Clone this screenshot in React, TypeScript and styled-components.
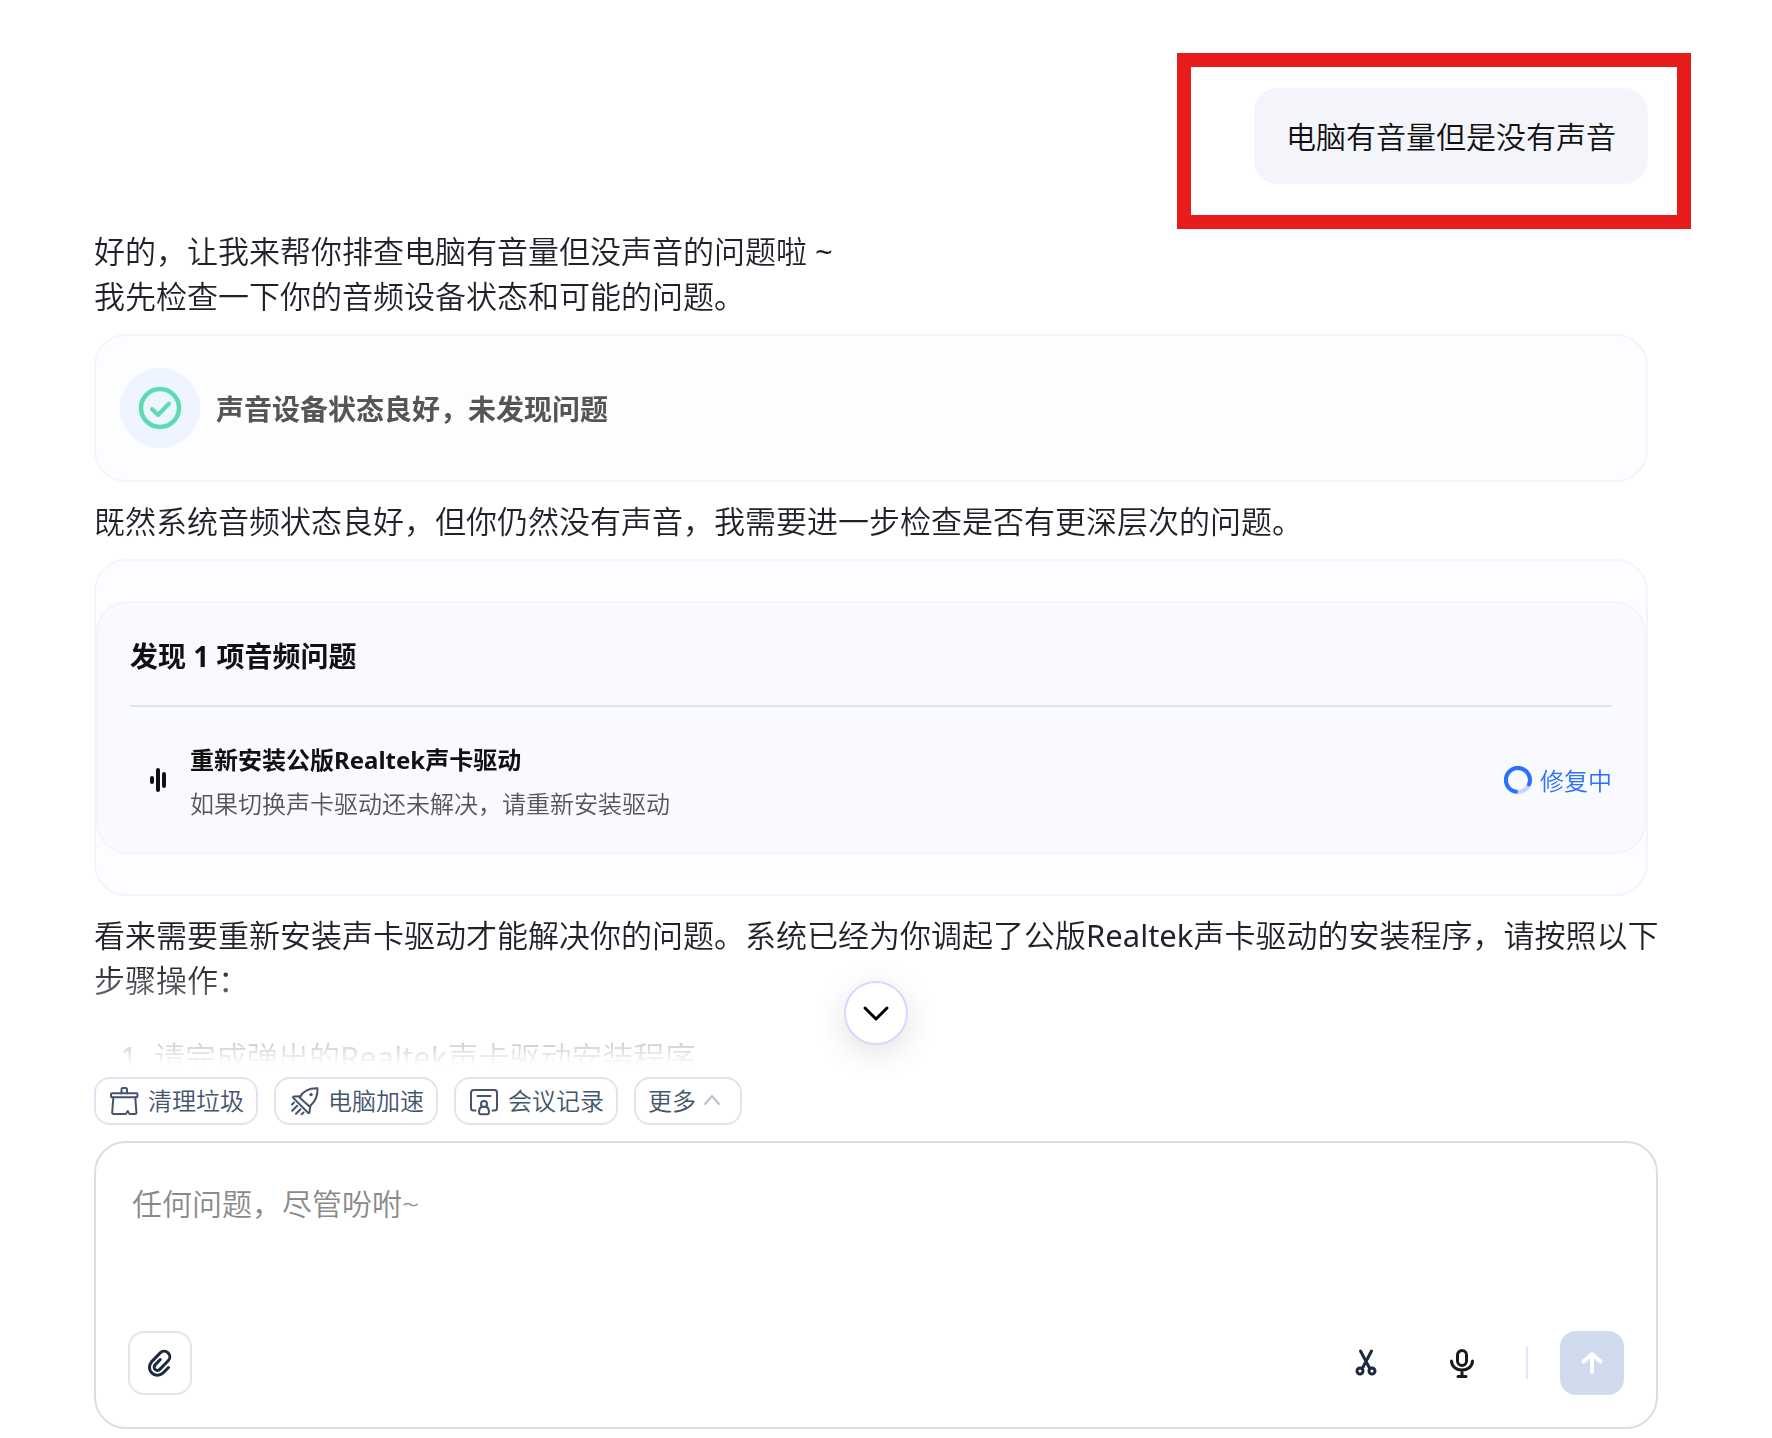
import React from "react";
import styled, { createGlobalStyle } from "styled-components";

const Global = createGlobalStyle`
  * { box-sizing: border-box; }
  body {
    margin: 0;
    background: #fff;
    color: #1f2329;
    font-family: "Noto Sans", "Noto Sans CJK SC", sans-serif;
    font-weight: 350;
  }
  button, textarea { font: inherit; }
`;

const Page = styled.div`
  display: flex;
  flex-direction: column;
  height: 100vh;
  overflow: hidden;
`;

const Feed = styled.main`
  flex: 1;
  min-height: 0;
  overflow: hidden;
  padding: 88px 124px 0 94px;
  mask-image: linear-gradient(to top, transparent 0, #000 100px);
`;

const UserRow = styled.div`
  display: flex;
  justify-content: flex-end;
  margin-bottom: 45px;
`;

const Bubble = styled.div`
  position: relative;
  padding: 25px 32px 23px;
  border-radius: 24px;
  background: #f3f5fa;
  color: #111;
  font-size: 30px;
  line-height: 48px;
`;

const Highlight = styled.div`
  position: absolute;
  inset: -35px -43px -45px -77px;
  border: 14px solid #e71c1c;
  pointer-events: none;
`;

const Answer = styled.p`
  margin: 0;
  font-size: 31px;
  line-height: 45px;
  white-space: nowrap;
`;

const Latin = styled.span`
  font-weight: 400;
`;

const Card = styled.section`
  margin: 15px 0 17px;
  border: 2px solid #f3f5fa;
  border-radius: 32px;
  background: #fcfdff;
`;

const ResultCard = styled(Card)`
  display: flex;
  align-items: center;
  gap: 16px;
  padding: 32px 24px;
  color: #555;
  font-size: 28px;
  font-weight: 700;
`;

const CheckBadge = styled.span`
  display: flex;
  align-items: center;
  justify-content: center;
  width: 80px;
  height: 80px;
  border-radius: 50%;
  background: #eef5ff;
`;

const IssueCard = styled(Card)`
  padding: 40px 0;
`;

const IssuePanel = styled.div`
  padding: 0 32px;
  border: 2px solid #f3f5fa;
  border-radius: 32px;
  background: #f9faff;
  color: #111;
`;

const IssueHeading = styled.h2`
  margin: 0;
  padding: 34px 0 30px;
  border-bottom: 2px solid #dfe5ee;
  font-size: 28px;
  font-weight: 700;
  line-height: 38px;
`;

const IssueItem = styled.div`
  display: flex;
  align-items: center;
  height: 145px;
`;

const IssueIcon = styled.span`
  display: flex;
  justify-content: center;
  width: 56px;
`;

const IssueText = styled.div`
  flex: 1;
  padding-top: 5px;
  margin-left: 4px;
  font-size: 24px;
  line-height: 44px;
`;

const IssueName = styled.div`
  font-weight: 700;
`;

const IssueHint = styled.div`
  color: #555;
`;

const Status = styled.span`
  display: flex;
  align-items: center;
  gap: 8px;
  color: #2b6fff;
  font-size: 24px;
`;

const Steps = styled.ol`
  margin: 32px 0 0;
  padding-left: 60px;
  font-size: 31px;
  line-height: 45px;
  li::marker { font-weight: 400; }
`;

const Footer = styled.footer`
  position: relative;
  padding: 12px 114px 9px 94px;
`;

const ScrollButton = styled.button`
  position: absolute;
  left: calc(50% - 10px);
  top: -84px;
  transform: translateX(-50%);
  display: flex;
  align-items: center;
  justify-content: center;
  width: 64px;
  height: 64px;
  padding: 0;
  border: 2px solid #d8d8ff;
  border-radius: 50%;
  background: #fff;
  box-shadow: 0 8px 32px rgba(0, 0, 0, 0.12);
`;

const Chips = styled.nav`
  display: flex;
  gap: 16px;
  margin-bottom: 16px;
`;

const Chip = styled.button`
  display: flex;
  align-items: center;
  gap: ${(p: { $gap: number }) => p.$gap}px;
  height: 48px;
  padding: 0 12px;
  border: 2px solid #e0e4f0;
  border-radius: 16px;
  background: #fff;
  color: #44546c;
  font-size: 24px;
  line-height: 32px;
`;

const Composer = styled.form`
  padding: 32px;
  border: 2px solid #dedede;
  border-radius: 32px;
  background: #fff;
`;

const Input = styled.textarea`
  display: block;
  width: 100%;
  height: 156px;
  padding: 6px 4px;
  border: 0;
  outline: 0;
  resize: none;
  background: transparent;
  font-size: 30px;
  line-height: 45px;
  &::placeholder { color: #8a8a8a; opacity: 1; }
`;

const Tools = styled.div`
  display: flex;
  align-items: center;
  gap: 32px;
`;

const ToolButton = styled.button`
  display: flex;
  align-items: center;
  justify-content: center;
  width: 64px;
  height: 64px;
  padding: 0;
  border: 2px solid ${(p: { $line?: string; $fill?: string }) => p.$line || "transparent"};
  border-radius: 16px;
  background: ${(p) => p.$fill || "transparent"};
`;

const Spacer = styled.div`
  flex: 1;
`;

const Separator = styled.div`
  width: 2px;
  height: 32px;
  background: #e2e5ff;
`;

const chipIcon = { width: 32, height: 32, viewBox: "0 0 32 32", fill: "none", stroke: "#44546c", strokeWidth: 2, strokeLinecap: "round", strokeLinejoin: "round" } as const;

const CleanIcon = () => (
  <svg {...chipIcon}>
    <path d="M13.500 8.300V4.500A1.500 1.500 0 0 1 15 3h2.500A1.500 1.500 0 0 1 19 4.500v3.800" />
    <rect x="3" y="8.300" width="26.500" height="4" rx="1" />
    <path d="M5.300 12.500 4.200 27.500q0 1.500 1.500 1.500H17.300q1 0 1.200-1l1.200-2 1.200 2q.3 1 1.300 1H27q1.500 0 1.400-1.500L27.300 12.500" />
  </svg>
);

const RocketIcon = () => (
  <svg {...chipIcon}>
    <path d="M11.500 12.500C15 6 21 3 29.500 3.200 30 11.500 27 17 21.500 21.500z" />
    <path d="M12.500 11.300 6 11.500q-1.500.3-.7 1.400L20 27.800q1.200.7 1.500-.6l.9-6.400" />
    <circle cx="23" cy="9.700" r="1.200" fill="#44546c" strokeWidth="1" />
    <path d="M6 17.500l-2 2M9.200 20.800l-5 5M12.500 24.200l-4.500 4.600M15.500 27.500l-1.800 1.800" />
  </svg>
);

const MeetingIcon = () => (
  <svg {...chipIcon}>
    <path d="M7.500 25.500H5.500a2.500 2.500 0 0 1-2.500-2.500V7.500A2.500 2.500 0 0 1 5.500 5h21A2.500 2.500 0 0 1 29 7.500V23a2.500 2.500 0 0 1-2.500 2.500h-2M9.500 11h13" />
    <circle cx="16" cy="19" r="3" />
    <path d="M14 21.500c-2.200 1-3 2.800-3 5.500q0 2.200 2 2.200h6q2 0 2-2.200c0-2.700-.8-4.500-3-5.500" />
  </svg>
);

export default function App() {
  return (
    <Page>
      <Global />
      <Feed>
        <UserRow>
          <Bubble>
            电脑有音量但是没有声音
            <Highlight />
          </Bubble>
        </UserRow>
        <Answer>
          好的，让我来帮你排查电脑有音量但没声音的问题啦 <Latin>~</Latin>
          <br />
          我先检查一下你的音频设备状态和可能的问题。
        </Answer>
        <ResultCard>
          <CheckBadge>
            <svg width="44" height="44" viewBox="0 0 44 44" fill="none" stroke="#5cdcb0" strokeLinecap="round" strokeLinejoin="round">
              <circle cx="22" cy="22" r="19" strokeWidth="4.500" />
              <path d="M14 23l6 6 11-11.500" strokeWidth="4" />
            </svg>
          </CheckBadge>
          声音设备状态良好，未发现问题
        </ResultCard>
        <Answer>既然系统音频状态良好，但你仍然没有声音，我需要进一步检查是否有更深层次的问题。</Answer>
        <IssueCard>
          <IssuePanel>
            <IssueHeading>发现 1 项音频问题</IssueHeading>
            <IssueItem>
              <IssueIcon>
                <svg width="24" height="24" viewBox="0 0 24 24" stroke="#111" strokeWidth="4" strokeLinecap="round">
                  <path d="M6 10v4M12 2v20M18 6v12" />
                </svg>
              </IssueIcon>
              <IssueText>
                <IssueName>重新安装公版Realtek声卡驱动</IssueName>
                <IssueHint>如果切换声卡驱动还未解决，请重新安装驱动</IssueHint>
              </IssueText>
              <Status>
                <svg width="28" height="28" viewBox="0 0 28 28" fill="none" strokeWidth="4" strokeLinecap="round">
                  <circle cx="14" cy="14" r="12" stroke="#c3d6ff" />
                  <path d="M12 25.800A12 12 0 1 1 25 18.500" stroke="#2b6fff" />
                </svg>
                修复中
              </Status>
            </IssueItem>
          </IssuePanel>
        </IssueCard>
        <Answer>
          看来需要重新安装声卡驱动才能解决你的问题。系统已经为你调起了公版<Latin>Realtek</Latin>声卡驱动的安装程序，请按照以下
          <br />
          步骤操作：
        </Answer>
        <Steps>
          <li>请完成弹出的<Latin>Realtek</Latin>声卡驱动安装程序</li>
        </Steps>
      </Feed>
      <Footer>
        <ScrollButton type="button" aria-label="回到底部">
          <svg width="28" height="28" viewBox="0 0 28 28" fill="none" stroke="#000" strokeWidth="3" strokeLinecap="round" strokeLinejoin="round">
            <path d="M3 9l11 11L25 9" />
          </svg>
        </ScrollButton>
        <Chips>
          <Chip type="button" $gap={8}><CleanIcon />清理垃圾</Chip>
          <Chip type="button" $gap={8}><RocketIcon />电脑加速</Chip>
          <Chip type="button" $gap={8}><MeetingIcon />会议记录</Chip>
          <Chip type="button" $gap={0}>
            更多
            <svg width="32" height="32" viewBox="0 0 32 32" fill="none" stroke="#b9bfca" strokeWidth="2" strokeLinecap="round">
              <path d="M9 19l7-8 7 8" />
            </svg>
          </Chip>
        </Chips>
        <Composer>
          <Input aria-label="输入问题" placeholder="任何问题，尽管吩咐~" />
          <Tools>
            <ToolButton type="button" aria-label="附件" $line="#e0e5f0">
              <svg width="32" height="32" viewBox="0 0 32 32" fill="none" stroke="#1d293d" strokeWidth="3" strokeLinecap="round" strokeLinejoin="round">
                <path d="M24.500 20.500l-5.700 5.700a8 8 0 0 1-11.300-11.300l8.700-9a5.500 5.500 0 0 1 8 7.800l-8.400 8.700a3.200 3.200 0 0 1-4.700-4.500l5.200-5.400" />
              </svg>
            </ToolButton>
            <Spacer />
            <ToolButton type="button" aria-label="截图">
              <svg width="32" height="32" viewBox="0 0 32 32" fill="none" stroke="#1d293d" strokeWidth="3" strokeLinecap="round">
                <path d="M10.500 4l9 17M21.500 4l-9 17" />
                <circle cx="10" cy="24" r="3" />
                <circle cx="22" cy="24" r="3" />
              </svg>
            </ToolButton>
            <ToolButton type="button" aria-label="语音">
              <svg width="32" height="32" viewBox="0 0 32 32" fill="none" stroke="#1a1a1a" strokeWidth="3" strokeLinecap="round">
                <rect x="11.500" y="3.500" width="9" height="15" rx="4.500" />
                <path d="M5.500 14c0 12 21 12 21 0M16 23.500V29M12 29.500h8" />
              </svg>
            </ToolButton>
            <Separator />
            <ToolButton type="submit" aria-label="发送" $fill="#d0dbed" $line="#d0dbed">
              <svg width="32" height="32" viewBox="0 0 32 32" fill="none" stroke="#fff" strokeWidth="4" strokeLinecap="round" strokeLinejoin="round">
                <path d="M16 25V7M7.500 14.500L16 7l8.500 7.500" />
              </svg>
            </ToolButton>
          </Tools>
        </Composer>
      </Footer>
    </Page>
  );
}
